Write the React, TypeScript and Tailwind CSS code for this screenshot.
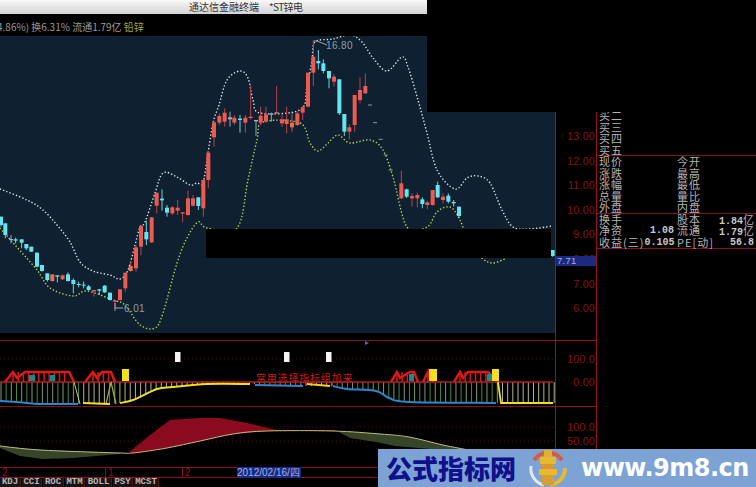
import React from "react";

type C = [number, number, number, number, number, string];
const zc1: C[] = [
  [625,453,458,540,565,"r"],[642,362,367,412,440,"r"],[658,340,348,368,375,"r"],[674,325,338,365,380,"r"],[690,335,352,358,380,"g"],
  [703,345,353,368,375,"r"],[720,345,356,360,398,"c"],[736,345,353,368,398,"r"],[752,255,350,354,358,"r"],[768,360,360,364,408,"g"],
  [782,320,347,368,375,"r"],[798,320,343,365,368,"r"],[814,338,340,344,365,"g"],[830,258,336,340,342,"r"],[846,345,358,370,380,"r"],
  [860,320,358,372,400,"r"],[876,340,368,382,395,"o"],[892,335,340,375,378,"r"],[908,318,322,338,360,"r"],[924,218,218,320,322,"r"],
  [940,120,170,218,258,"r"],[955,150,183,190,208,"c"],[970,178,190,213,220,"c"],[987,213,213,235,265,"c"],[1002,222,230,245,260,"r"],
  [1018,238,238,340,345,"c"],[1033,342,342,395,408,"c"],[1048,372,382,395,418,"r"],[1064,285,285,375,395,"r"],[1080,232,270,300,310,"r"],[1096,220,258,280,282,"r"],
];
const zc2: C[] = [
  [3,140,140,165,170,"c"],[16,160,160,195,205,"c"],[33,195,207,210,220,"g"],[47,203,208,212,220,"c"],[65,208,208,218,235,"c"],
  [79,222,222,235,240,"c"],[94,230,230,245,246,"c"],[111,248,248,290,292,"c"],[126,285,285,303,305,"c"],[142,310,310,330,335,"c"],
  [157,313,313,333,335,"o"],[172,316,316,320,337,"c"],[188,313,316,328,330,"r"],[204,307,313,333,335,"c"],[220,325,330,342,370,"c"],
  [236,335,342,345,352,"c"],[251,335,344,347,355,"c"],[266,345,349,360,362,"c"],[282,360,360,364,380,"r"],[298,357,358,362,375,"c"],
  [314,345,347,367,369,"c"],[330,368,368,390,392,"c"],[345,390,391,395,415,"r"],[360,358,358,390,392,"r"],[376,308,308,355,365,"r"],
  [392,275,288,303,305,"o"],[408,225,232,295,305,"r"],[423,165,168,230,255,"r"],[439,152,186,208,225,"c"],[455,142,142,217,219,"r"],
  [470,68,68,107,130,"r"],[486,58,86,91,122,"c"],[501,105,113,128,140,"c"],[517,108,112,130,135,"r"],[533,90,113,122,135,"r"],
  [548,126,127,131,157,"r"],[564,62,85,135,137,"r"],[579,75,85,107,110,"r"],[595,82,82,108,120,"c"],[610,30,30,115,140,"r"],
];
const zc3: C[] = [
  [64,212,250,295,297,"r"],[80,266,268,290,294,"c"],[96,280,288,295,320,"r"],[112,278,285,295,322,"r"],[127,292,298,312,325,"c"],
  [142,302,307,315,328,"r"],[158,270,270,315,317,"r"],[173,245,255,292,294,"c"],[189,280,290,300,310,"r"],[205,280,287,305,310,"c"],
  [221,300,306,310,320,"c"],[237,320,320,348,355,"c"],[518,450,450,468,470,"c"],
];
const candles: C[] = [
  ...zc2.map((c): C => [c[0]/3,170+c[1]/3,170+c[2]/3,170+c[3]/3,170+c[4]/3,c[5]]),
  ...zc1.map((c): C => [c[0]/3,c[1]/3,c[2]/3,c[3]/3,c[4]/3,c[5]]),
  ...zc3.map((c): C => [380+c[0]/3,100+c[1]/3,100+c[2]/3,100+c[3]/3,100+c[4]/3,c[5]]),
];
const bodyCol: Record<string,string> = { r:"#ec5a50", c:"#62e6f0", g:"#8fb8c8", o:"#e8704a" };
const wickCol: Record<string,string> = { r:"#b8404e", c:"#62d8e4", g:"#8fa8b8", o:"#c05a50" };

type P = [number, number];
function smooth(p: P[]): string {
  let d = `M${p[0][0]} ${p[0][1]}`;
  for (let i = 0; i < p.length - 1; i++) {
    const a = p[Math.max(i-1,0)], b = p[i], c = p[i+1], e = p[Math.min(i+2,p.length-1)];
    const c1: P = [b[0]+(c[0]-a[0])/6, b[1]+(c[1]-a[1])/6];
    const c2: P = [c[0]-(e[0]-b[0])/6, c[1]-(e[1]-b[1])/6];
    d += `C${c1[0].toFixed(1)} ${c1[1].toFixed(1)} ${c2[0].toFixed(1)} ${c2[1].toFixed(1)} ${c[0]} ${c[1]}`;
  }
  return d;
}
const upper: P[] = [[0,189],[27,200],[43,210],[57,225],[70,242],[80,262],[93,271],[110,275],[120,279],[128,270],[135,245],[140,227],[145,222],[155,193],[163,173],[177,177],[190,185],[197,183],[203,183],[208,153],[213,123],[219,105],[227,80],[240,71],[248,78],[253,100],[260,113],[300,110],[307,87],[312,60],[315,42],[333,39],[350,35],[362,42],[373,58],[387,71],[402,57],[408,67],[418,100],[427,133],[437,170],[455,189],[467,178],[478,176],[490,183],[502,210],[513,227],[530,229],[552,226]];
const lower: P[] = [[0,228],[15,245],[37,270],[50,288],[73,296],[87,291],[113,300],[125,305],[140,325],[155,328],[163,313],[177,263],[187,238],[198,222],[207,228],[237,228],[248,180],[257,140],[263,122],[300,123],[310,143],[318,151],[328,143],[338,135],[350,143],[370,140],[383,150],[393,177],[407,227],[427,227],[437,212],[450,207],[460,220],[470,245],[483,259],[493,263],[505,259]];
const dashes: P[] = [[370,105],[375,122.7],[380.7,139.3],[385.7,155],[390.7,170]];

function ChartSvg() {
  return (
    <svg width="555" height="297" viewBox="0 36 555 297" className="block">
      <path d={smooth(upper)} fill="none" stroke="#d8e0e0" strokeWidth="1.4" strokeDasharray="1.4 2" />
      <path d={smooth(lower)} fill="none" stroke="#b8cc58" strokeWidth="1.4" strokeDasharray="1.4 2" />
      {candles.map((c, i) => (
        <g key={i}>
          <line x1={c[0]} x2={c[0]} y1={c[1]} y2={c[4]} stroke={wickCol[c[5]]} strokeWidth="1" />
          <rect x={c[0]-2} y={c[2]} width="4" height={Math.max(c[3]-c[2],1)} fill={bodyCol[c[5]]} />
        </g>
      ))}
      {dashes.map((d,i)=>(<line key={i} x1={d[0]-2} x2={d[0]+2} y1={d[1]} y2={d[1]} stroke="#8a9aa0" strokeWidth="1" />))}
      <polyline points="314,41 317,41 327,45" fill="none" stroke="#a8a0a8" strokeWidth="1" />
      <line x1="115" x2="123" y1="308" y2="308" stroke="#a8a8b0" strokeWidth="1" />
      <line x1="115" x2="115" y1="303" y2="311" stroke="#a8a8b0" strokeWidth="1" />
      <text x="326" y="49" fontSize="10" fill="#8e9ea8" letterSpacing="0.4" fontFamily="'Liberation Sans',sans-serif">16.80</text>
      <text x="124" y="312" fontSize="10" fill="#8e9ea8" letterSpacing="0.4" fontFamily="'Liberation Sans',sans-serif">6.01</text>
    </svg>
  );
}

const shapes: { x: number[]; }[] = [
  { x:[5,13,17,25,69,74] },{ x:[85,93,97,102,111,115] },{ x:[391,397,400,410,414,418] },{ x:[423,428,429,430,431,433] },{ x:[454,460,463,468,488,498] },
];
const blueRanges: [number,number][] = [[0,80],[107,117],[255,304],[333,498]];
function Pane1() {
  const bars: number[] = [];
  for (let x = 1; x < 555; x += 5.17) bars.push(x);
  const low = (x:number) => {
    const pts: P[] = [[0,401],[17,402],[37,404],[78,404],[83,403],[110,404],[120,403],[133,400],[157,389],[173,387],[207,384],[250,384],[303,386],[330,386],[347,389],[376,391],[389,398],[409,402],[496,403],[553,403]];
    for (let i=0;i<pts.length-1;i++) if (x>=pts[i][0]&&x<=pts[i+1][0]) { const t=(x-pts[i][0])/(pts[i+1][0]-pts[i][0]); return pts[i][1]+t*(pts[i+1][1]-pts[i][1]); }
    return 403;
  };
  return (
    <svg width="555" height="65" viewBox="0 341 555 65" className="block">
      <line x1="0" x2="555" y1="359" y2="359" stroke="#4a0a0a" strokeDasharray="1 3" />
      {bars.map((x,i)=>{
        const blue = blueRanges.some(r=>x>=r[0]&&x<=r[1]);
        return <line key={i} x1={x} x2={x} y1="382" y2={low(x)} stroke={blue?(i%2?"#3f8a40":"#7f9a70"):"#b4b48a"} strokeWidth="1" />;
      })}
      <line x1="0" x2="553" y1="382" y2="382" stroke="#b81a20" strokeWidth="1.5" />
      {shapes.map((s,i)=>{
        const [a,b,c,d,e,f]=s.x;
        const v:number[]=[]; for(let x=b;x<=e;x+=5.17) v.push(x);
        return <g key={i}>
          <polyline points={`${a},382 ${b},372 ${c},378 ${d},372 ${e},372 ${f},382`} fill="none" stroke="#e01818" strokeWidth="2.5" />
          {v.map((x,j)=><line key={j} x1={x} x2={x} y1="372" y2="382" stroke="#d81818" strokeWidth="1.5" />)}
        </g>;
      })}
      {[[29,375,6,6],[50,375,5,6],[409,374,5,7],[487,374,5,7]].map((r,i)=><rect key={i} x={r[0]} y={r[1]} width={r[2]} height={r[3]} fill="#178a92" />)}
      {[[122,369,7,12],[429,369,8,12],[492,369,7,12]].map((r,i)=><rect key={i} x={r[0]} y={r[1]} width={r[2]} height={r[3]} fill="#f2e020" />)}
      {[175,284,326].map(x=><rect key={x} x={x} y="352" width="5.5" height="10" fill="#f4f4f4" />)}
      <text x="256" y="382" fontSize="10" fill="#c81818" letterSpacing="0.8" fontFamily="'Noto Sans CJK SC',sans-serif">常用选择指标组加来</text>
      <polyline points="0,401 17,402 37,404 78,404" fill="none" stroke="#2f86d0" strokeWidth="2" />
      <polyline points="74,382 80,404" fill="none" stroke="#c8c880" strokeWidth="1" />
      <polyline points="83,403 106,404 111,382 116,404" fill="none" stroke="#a8b040" strokeWidth="1.2" />
      <polyline points="83,403 110,404" fill="none" stroke="#f0e020" strokeWidth="2" />
      <path d={smooth([[120,403],[133,400],[157,389],[173,387],[207,384],[250,384]])} fill="none" stroke="#f0e020" strokeWidth="2" />
      <polyline points="255,385 303,386" fill="none" stroke="#2f86d0" strokeWidth="2" />
      <polyline points="307,384 330,386" fill="none" stroke="#f0d020" strokeWidth="2" />
      <path d={smooth([[333,386],[347,389],[376,391],[389,398],[409,402],[496,403]])} fill="none" stroke="#2f86d0" strokeWidth="2" />
      <polyline points="498,382 501,403 553,403" fill="none" stroke="#f0e020" strokeWidth="1.8" />
      <polygon points="365,341 369,343 365,345" fill="#3a70c0" />
    </svg>
  );
}

function Pane2() {
  const line: P[] = [[0,446],[40,450],[120,453],[133,453],[167,448],[200,441],[233,434],[267,431],[333,431],[380,434],[409,437],[443,445],[469,450]];
  return (
    <svg width="555" height="60" viewBox="0 407 555 60" className="block">
      <line x1="0" x2="555" y1="427" y2="427" stroke="#4a0a0a" strokeDasharray="1 3" />
      <line x1="0" x2="555" y1="441" y2="441" stroke="#4a0a0a" strokeDasharray="1 3" />
      <polygon points="0,446 40,450 120,453 120,454 73,458 43,459 20,456 0,448" fill="#364428" />
      <polygon points="128,453 150,435 170,420 200,418 220,418 247,423 277,430 300,431 267,431 233,434 200,441 167,448 133,453" fill="#8a0b1f" />
      <polygon points="337,431 380,434 409,437 443,445 469,450 430,449 395,446 376,442 350,438" fill="#364428" />
      <line x1="305" x2="335" y1="430.5" y2="430.5" stroke="#7a1018" />
      <path d={smooth(line)} fill="none" stroke="#c4bc78" strokeWidth="1" />
    </svg>
  );
}

const prices = ["13.00","12.00","11.00","10.00","9.00","8.00","7.00","6.00"];
const numCls = "font-['Liberation_Mono',monospace] font-bold text-[10px] tracking-normal text-[#c8c8c8]";
const yi = <span className="font-['Noto_Sans_CJK_SC',sans-serif] font-normal text-[11px] text-[#b4b4b4]">亿</span>;

function Row({ a, b, c, d }: { a?: string; b?: string; c?: string; d?: React.ReactNode }) {
  return (
    <div className="grid grid-cols-[75px_77px] gap-x-[3px] h-[11.5px] leading-[11.5px] text-[11px] tracking-[1px] text-[#b4b4b4]">
      <div className="flex justify-between whitespace-nowrap"><span>{a}</span><span className={numCls}>{b}</span></div>
      <div className="flex justify-between whitespace-nowrap"><span>{c}</span><span className={numCls}>{d}</span></div>
    </div>
  );
}

function Logo() {
  return (
    <svg width="40" height="38" viewBox="0 0 40 38" className="block">
      <path d="M6 11A17 17 0 0 1 34 11" fill="none" stroke="#d85a40" strokeWidth="4" />
      <path d="M37 19A17 17 0 0 1 22 36" fill="none" stroke="#e8b830" strokeWidth="4" />
      <path d="M16 36A17 17 0 0 1 3 17" fill="none" stroke="#e4e8f0" strokeWidth="3" />
      <rect x="16" y="1" width="8" height="7" fill="#e0b030" />
      <rect x="12" y="8" width="16" height="7" fill="#e8b830" />
      <rect x="14" y="15" width="12" height="5" fill="#d89a30" />
      <rect x="11" y="20" width="18" height="6" fill="#e8b830" />
      <rect x="14" y="26" width="12" height="10" fill="#d8a030" />
    </svg>
  );
}

export default function App() {
  return (
    <div className="relative w-[756px] h-[487px] bg-black overflow-hidden flex flex-col font-['Noto_Sans_CJK_SC',sans-serif]">
      <div className="h-[14px] w-[427px] shrink-0 bg-gradient-to-b from-[#f8f8f8] to-[#d4d4d4] pl-[189px] flex gap-[10px] text-[10px] leading-[13px] text-[#333] whitespace-nowrap">
        <span>通达信金融终端</span>
        <span className="tracking-[-0.6px]">*ST锌电</span>
      </div>
      <div className="h-[22px] shrink-0 -ml-[3px] text-[10px] leading-[26px] text-[#9a9a9a] whitespace-nowrap">
        4.86%) 换6.31% 流通1.79亿 <span className="text-[#a8a83c]">铅锌</span>
      </div>

      <div className="flex h-[431px] shrink-0">
        <div className="w-[555px] shrink-0 flex flex-col">
          <div className="relative h-[297px] bg-[#0f2030] shrink-0">
            <ChartSvg />
            <div className="absolute left-[427px] top-0 w-[128px] h-[76px] bg-black" />
            <div className="absolute left-[206px] top-[193px] w-[345px] h-[29px] bg-black" />
          </div>
          <div className="h-[8px] shrink-0 border-b border-[#8a0f1a]" />
          <div className="h-[66px] shrink-0 border-b border-[#8a0f1a]"><Pane1 /></div>
          <Pane2 />
        </div>

        <div className="w-[42px] shrink-0 flex flex-col pt-[76px] font-['Liberation_Sans',sans-serif] text-[10.5px] tracking-[0.3px] text-right text-[color:#8a1018]">
          <div className="relative h-[229px] shrink-0 border-x border-b border-[#9a1018] pt-[16px] pr-[1px]">
            {prices.map(p => <div key={p} className="h-[24.6px] leading-[16px]">{p}</div>)}
            <div className="absolute left-0 right-0 top-[144px] h-[10px] bg-[#1b2a80] text-left pl-[1px] text-[9.5px] leading-[10px] text-[#9fb0e8]">7.71</div>
          </div>
          <div className="h-[66px] shrink-0 border-x border-b border-[#9a1018] pt-[11px] pr-[1px]">
            <div className="h-[23px] leading-[14px]">100.0</div>
            <div className="leading-[14px]">0.00</div>
          </div>
          <div className="h-[60px] shrink-0 border-x border-[#9a1018] pt-[13px] pr-[1px]">
            <div className="h-[14px] leading-[14px]">100.0</div>
            <div className="leading-[14px]">50.00</div>
          </div>
        </div>

        <div className="flex-1 mt-[76px] h-[137px] overflow-hidden">
          <div className="-mt-[2px]">
            <div className="border-b border-[#8a0f1a] h-[46px] pl-[2px]">
              {["买二","买三","买四","买五"].map(t => <Row key={t} a={t} />)}
            </div>
            <div className="border-b border-[#8a0f1a] h-[57.5px] pl-[2px]">
              <Row a="现价" c="今开" />
              <Row a="涨跌" c="最高" />
              <Row a="涨幅" c="最低" />
              <Row a="总量" c="量比" />
              <Row a="外盘" c="内盘" />
            </div>
            <div className="border-b border-[#8a0f1a] h-[35px] pl-[2px]">
              <Row a="换手" c="股本" d={<>1.84{yi}</>} />
              <Row a="净资" b="1.08" c="流通" d={<>1.79{yi}</>} />
              <Row a="收益(三)" b="0.105" c="PE[动]" d="56.8" />
            </div>
          </div>
        </div>
      </div>

      <div className="absolute left-0 top-[467px] w-[597px] h-[11px] border-y border-[#8a0f1a] text-[10px] leading-[9px] text-[color:#8a1018] font-['Liberation_Sans',sans-serif]">
        <div className="flex h-full">
          <div className="w-[106px] border-r border-[#8a0f1a] pl-[2px]">2</div>
          <div className="w-[77px] border-r border-[#8a0f1a] pl-[2px]">1</div>
          <div className="w-[54px] pl-[2px]">2</div>
          <div className="w-[64px] bg-[#1b2a80] text-[#a0b0ea] whitespace-nowrap overflow-hidden -mt-[1px] h-[11px] leading-[11px]">2012/02/16/四</div>
        </div>
      </div>
      <div className="absolute left-0 top-[478px] flex gap-[1px] h-[9px] font-['Liberation_Mono',monospace] font-bold text-[9px] leading-[9px] text-[#b8b8b8]">
        {[["KDJ","w-[21px]"],["CCI","w-[20px]"],["ROC","w-[21px]"],["MTM","w-[20px]"],["BOLL","w-[26px]"],["PSY","w-[20px]"],["MCST","w-[25px]"]].map(([t,w]) => (
          <div key={t} className={`${w} bg-[#1c1414] border-r border-[#5a1016] text-center`}>{t}</div>
        ))}
      </div>

      <div className="absolute left-[378px] top-[449px] w-[378px] h-[38px] bg-[#7ca3d4] flex items-center whitespace-nowrap">
        <span className="ml-[8px] w-[142px] text-[26px] leading-[38px] font-black text-[#10108c]">公式指标网</span>
        <Logo />
        <span className="ml-[13px] text-[24px] leading-[38px] font-bold text-white font-['DejaVu_Sans',sans-serif] tracking-[-0.5px]">www.9m8.cn</span>
      </div>
    </div>
  );
}
